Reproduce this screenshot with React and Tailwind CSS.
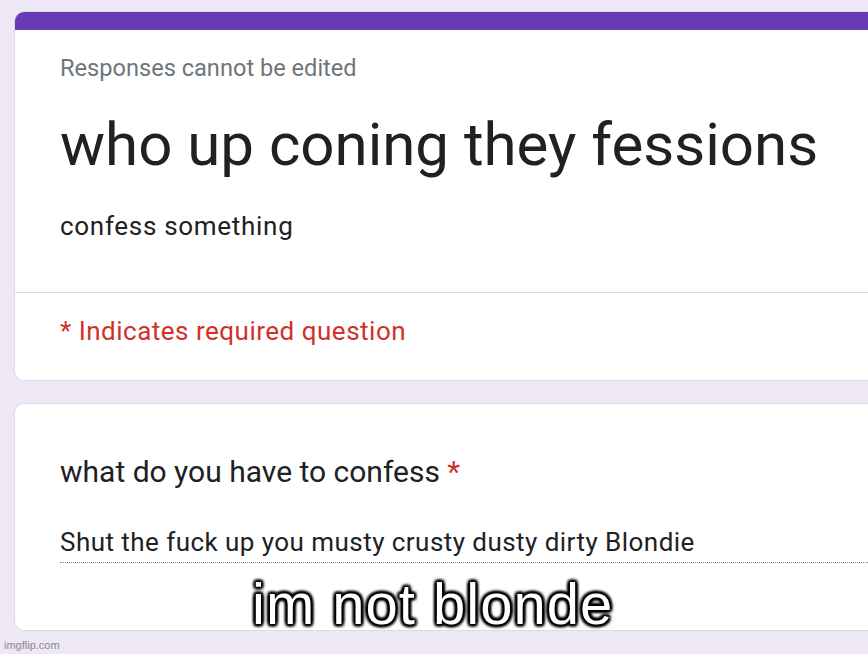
export default function App() {
  return (
    <div
      className="relative w-[868px] h-[654px] overflow-hidden bg-[#ede7f6]"
      style={{ fontFamily: "Roboto, 'Liberation Sans', sans-serif" }}
    >
      <div className="pt-[11px] pl-[14px] flex flex-col gap-[22px] w-[1000px]">
        <div className="h-[370px] rounded-[10px] bg-white border border-[#dadce0] overflow-hidden flex flex-col">
          <div className="h-[18px] bg-[#673ab7] shrink-0"></div>
          <div className="pl-[45px] pt-[24px] flex flex-col">
            <div className="text-[23.6px] leading-[28px] text-[#70757a]">Responses cannot be edited</div>
            <div className="text-[60px] leading-[72px] text-[#202124] mt-[27px]">who up coning they fessions</div>
            <div className="text-[26px] leading-[32px] tracking-[0.7px] text-[#202124] mt-[29px]">confess something</div>
          </div>
          <div className="mt-[50px] border-t border-[#dadce0]"></div>
          <div className="pl-[45px] pt-[22px] text-[26px] leading-[32px] tracking-[0.5px] text-[#d2302a]">* Indicates required question</div>
        </div>
        <div className="h-[228px] rounded-[10px] bg-white border border-[#dadce0] flex flex-col pl-[45px]">
          <div className="mt-[50px] text-[30px] leading-[36px] text-[#202124]">
            what do you have to confess <span className="text-[#d2302a]">*</span>
          </div>
          <div className="mt-[36px] text-[26px] leading-[32px] tracking-[0.45px] text-[#202124] pb-[4px] border-b border-dotted border-[#80868b] w-[854px]">
            Shut the fuck up you musty crusty dusty dirty Blondie
          </div>
        </div>
      </div>
      <div
        className="absolute left-[252px] top-[575px] text-[58px] leading-[58px] tracking-[1px] text-white"
        style={{
          fontFamily: "'Liberation Sans', Arial, sans-serif",
          textShadow:
            "2px 2px 3px #000, -2px -2px 3px #000, 2px -2px 3px #000, -2px 2px 3px #000, 0 2px 3px #000, 0 -2px 3px #000, 2px 0 3px #000, -2px 0 3px #000",
        }}
      >
        im not blonde
      </div>
      <div
        className="absolute left-[4px] top-[638px] text-[11px] leading-[14px] text-[#8a8a8a]"
        style={{ fontFamily: "'Liberation Sans', Arial, sans-serif" }}
      >
        imgflip.com
      </div>
    </div>
  );
}
